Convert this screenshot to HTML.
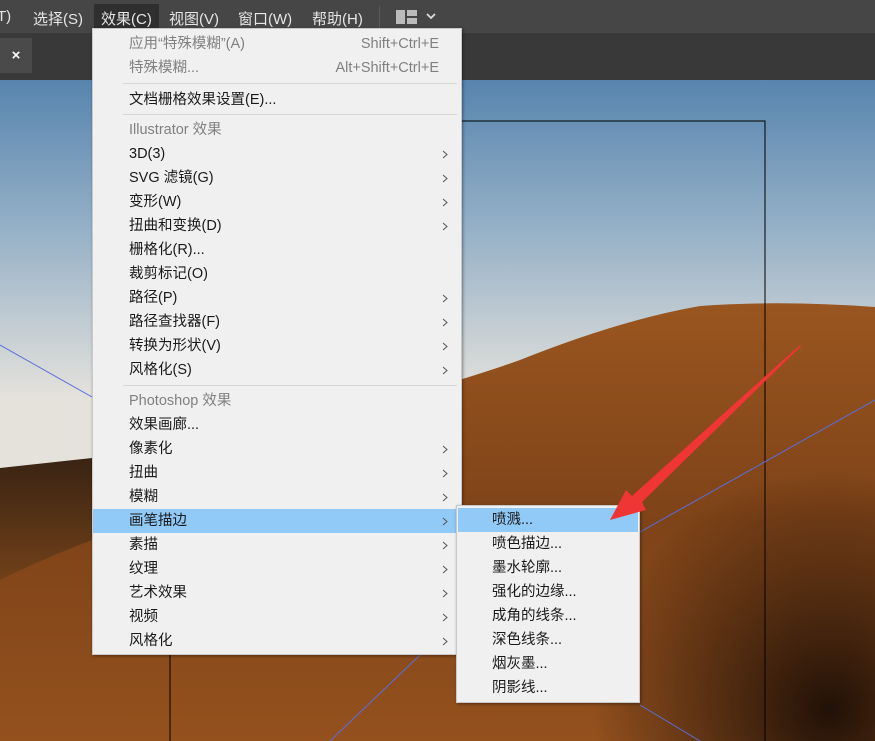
<!DOCTYPE html>
<html><head><meta charset="utf-8"><style>
*{margin:0;padding:0;box-sizing:border-box}
body{width:875px;height:741px;overflow:hidden;position:relative;background:#393939;font-family:"Liberation Sans","Noto Sans CJK SC",sans-serif;font-size:14px}
.mb{position:absolute;left:0;top:0;width:875px;height:33px;background:#464646;color:#e6e6e6}
.mb span{position:absolute;top:8px;font-size:15px}
.tab{position:absolute;left:0;top:38px;width:32px;height:35px;background:#4a4a4a;color:#fff;font-weight:bold;text-align:center;line-height:35px;font-size:15px}
.canvas{position:absolute;left:0;top:80px;width:875px;height:661px;overflow:hidden}
.menu{position:absolute;left:92px;top:28px;width:370px;height:627px;background:#f0f0f0;border:1px solid #c8c8c8;box-shadow:1px 1px 3px rgba(0,0,0,.4)}
.it{position:absolute;left:0;width:368px;height:24px;line-height:24px;padding-left:36px;color:#1a1a1a;font-size:14.5px}
.it.g{color:#808080}
.it .k{position:absolute;right:22px;top:0;color:#808080}
.it .a{position:absolute;left:349px;top:8px;width:6px;height:9px}
.sep{position:absolute;left:30px;right:4px;height:1px;background:#d6d6d6}
.hl{background:#91c9f7}
.sub{position:absolute;left:456px;top:505px;width:184px;height:198px;background:#f0f0f0;border:1px solid #c8c8c8;box-shadow:1px 1px 3px rgba(0,0,0,.4)}
.sub .it{width:180px;left:1px;padding-left:34px}
</style></head><body>
<div class="mb">
<span style="left:-3px">T)</span>
<span style="left:33px">选择(S)</span>
<div style="position:absolute;left:94px;top:4px;width:65px;height:27px;background:#2f2f2f"></div>
<span style="left:101px">效果(C)</span>
<span style="left:169px">视图(V)</span>
<span style="left:238px">窗口(W)</span>
<span style="left:312px">帮助(H)</span>
<div style="position:absolute;left:379px;top:6px;width:1px;height:22px;background:#5a5a5a"></div>
<div style="position:absolute;left:396px;top:10px;width:9px;height:14px;background:#bbb"></div>
<div style="position:absolute;left:407px;top:10px;width:10px;height:6px;background:#bbb"></div>
<div style="position:absolute;left:407px;top:18px;width:10px;height:6px;background:#bbb"></div>
<svg style="position:absolute;left:426px;top:12px" width="10" height="8"><path d="M1 2 L5 6 L9 2" stroke="#ddd" stroke-width="1.8" fill="none"/></svg>
</div>
<div class="tab">×</div>
<div class="canvas">
<svg width="875" height="661" viewBox="0 80 875 661">
<defs>
<linearGradient id="sky" x1="0" y1="80" x2="0" y2="400" gradientUnits="userSpaceOnUse"><stop offset="0" stop-color="#5784ae"/><stop offset=".45" stop-color="#93afc6"/><stop offset="1" stop-color="#e5e2dc"/></linearGradient>
<linearGradient id="sand" x1="0" y1="300" x2="0" y2="741" gradientUnits="userSpaceOnUse"><stop offset="0" stop-color="#9a5620"/><stop offset=".5" stop-color="#7e4318"/><stop offset="1" stop-color="#94511e"/></linearGradient>
<radialGradient id="sh" cx="830" cy="710" r="240" gradientUnits="userSpaceOnUse"><stop offset="0" stop-color="#1c0e06" stop-opacity=".95"/><stop offset="1" stop-color="#1c0e06" stop-opacity="0"/></radialGradient>
<linearGradient id="ld" x1="0" y1="460" x2="0" y2="600" gradientUnits="userSpaceOnUse"><stop offset="0" stop-color="#3a2414"/><stop offset="1" stop-color="#7a4519"/></linearGradient>
</defs>
<rect x="0" y="80" width="875" height="661" fill="url(#sky)"/>
<path d="M0 470 L90 462 Q250 440 350 410 Q450 385 520 360 Q620 320 700 306 Q780 300 875 307 L875 741 L0 741Z" fill="url(#sand)"/>
<path d="M0 468 L92 458 L92 540 Q40 560 0 580Z" fill="url(#ld)"/>
<rect x="0" y="80" width="875" height="661" fill="url(#sh)"/>
<path d="M170 741 V121 H765 V741" fill="none" stroke="#000" stroke-width="1"/>
<line x1="0" y1="345" x2="92" y2="397" stroke="#5a6ee0" stroke-width="1"/>
<line x1="640" y1="532" x2="875" y2="400" stroke="#5a6ee0" stroke-width="1"/>
<line x1="330" y1="741" x2="420" y2="655" stroke="#5a6ee0" stroke-width="1"/>
<line x1="640" y1="705" x2="700" y2="741" stroke="#5a6ee0" stroke-width="1"/>
</svg>
</div>
<div class="menu">
<div class="it g" style="top:3px">应用“特殊模糊”(A)<span class="k">Shift+Ctrl+E</span></div>
<div class="it g" style="top:27px">特殊模糊...<span class="k">Alt+Shift+Ctrl+E</span></div>
<div class="sep" style="top:54px"></div>
<div class="it" style="top:59px">文档栅格效果设置(E)...</div>
<div class="sep" style="top:85px"></div>
<div class="it g" style="top:89px">Illustrator 效果</div>
<div class="it" style="top:113px">3D(3)<svg class="a"><path d="M1 1 L5 4.5 L1 8" stroke="#555" fill="none"/></svg></div>
<div class="it" style="top:137px">SVG 滤镜(G)<svg class="a"><path d="M1 1 L5 4.5 L1 8" stroke="#555" fill="none"/></svg></div>
<div class="it" style="top:161px">变形(W)<svg class="a"><path d="M1 1 L5 4.5 L1 8" stroke="#555" fill="none"/></svg></div>
<div class="it" style="top:185px">扭曲和变换(D)<svg class="a"><path d="M1 1 L5 4.5 L1 8" stroke="#555" fill="none"/></svg></div>
<div class="it" style="top:209px">栅格化(R)...</div>
<div class="it" style="top:233px">裁剪标记(O)</div>
<div class="it" style="top:257px">路径(P)<svg class="a"><path d="M1 1 L5 4.5 L1 8" stroke="#555" fill="none"/></svg></div>
<div class="it" style="top:281px">路径查找器(F)<svg class="a"><path d="M1 1 L5 4.5 L1 8" stroke="#555" fill="none"/></svg></div>
<div class="it" style="top:305px">转换为形状(V)<svg class="a"><path d="M1 1 L5 4.5 L1 8" stroke="#555" fill="none"/></svg></div>
<div class="it" style="top:329px">风格化(S)<svg class="a"><path d="M1 1 L5 4.5 L1 8" stroke="#555" fill="none"/></svg></div>
<div class="sep" style="top:356px"></div>
<div class="it g" style="top:360px">Photoshop 效果</div>
<div class="it" style="top:384px">效果画廊...</div>
<div class="it" style="top:408px">像素化<svg class="a"><path d="M1 1 L5 4.5 L1 8" stroke="#555" fill="none"/></svg></div>
<div class="it" style="top:432px">扭曲<svg class="a"><path d="M1 1 L5 4.5 L1 8" stroke="#555" fill="none"/></svg></div>
<div class="it" style="top:456px">模糊<svg class="a"><path d="M1 1 L5 4.5 L1 8" stroke="#555" fill="none"/></svg></div>
<div class="it hl" style="top:480px">画笔描边<svg class="a"><path d="M1 1 L5 4.5 L1 8" stroke="#555" fill="none"/></svg></div>
<div class="it" style="top:504px">素描<svg class="a"><path d="M1 1 L5 4.5 L1 8" stroke="#555" fill="none"/></svg></div>
<div class="it" style="top:528px">纹理<svg class="a"><path d="M1 1 L5 4.5 L1 8" stroke="#555" fill="none"/></svg></div>
<div class="it" style="top:552px">艺术效果<svg class="a"><path d="M1 1 L5 4.5 L1 8" stroke="#555" fill="none"/></svg></div>
<div class="it" style="top:576px">视频<svg class="a"><path d="M1 1 L5 4.5 L1 8" stroke="#555" fill="none"/></svg></div>
<div class="it" style="top:600px">风格化<svg class="a"><path d="M1 1 L5 4.5 L1 8" stroke="#555" fill="none"/></svg></div>
</div>
<div class="sub">
<div class="it hl" style="top:2px">喷溅...</div>
<div class="it" style="top:26px">喷色描边...</div>
<div class="it" style="top:50px">墨水轮廓...</div>
<div class="it" style="top:74px">强化的边缘...</div>
<div class="it" style="top:98px">成角的线条...</div>
<div class="it" style="top:122px">深色线条...</div>
<div class="it" style="top:146px">烟灰墨...</div>
<div class="it" style="top:170px">阴影线...</div>
</div>
<svg style="position:absolute;left:600px;top:340px" width="210" height="190"><polygon points="200,5 201,6 42,162 46,170 10,180 26,150 32,156" fill="#f03535"/></svg>
</body></html>
